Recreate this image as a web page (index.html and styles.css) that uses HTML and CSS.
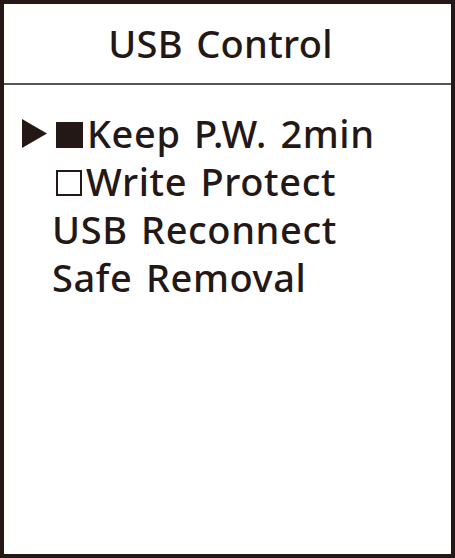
FILE: index.html
```html
<!DOCTYPE html>
<html>
<head>
<meta charset="utf-8">
<link rel="stylesheet" href="styles.css">
</head>
<body>
<div class="screen">
  <div class="header">USB Control</div>
  <ul class="menu">
    <li class="row selected"><span class="cursor"><svg width="25" height="29" viewBox="0 0 25 29"><polygon points="0,0 25,14.5 0,29" fill="#231815"/></svg></span><span class="label"><span class="box filled"></span>Keep P.W. 2min</span></li>
    <li class="row"><span class="cursor"></span><span class="label"><span class="box empty"></span>Write Protect</span></li>
    <li class="row"><span class="cursor"></span><span class="label">USB Reconnect</span></li>
    <li class="row"><span class="cursor"></span><span class="label">Safe Removal</span></li>
  </ul>
</div>
</body>
</html>
```

FILE: styles.css
```css
html, body {
  margin: 0;
  padding: 0;
  background: #231815;
}
.screen {
  box-sizing: border-box;
  width: 455px;
  height: 558px;
  border-style: solid;
  border-color: #231815;
  border-width: 4px 4px 4px 4px;
  background: #ffffff;
  font-family: "Noto Sans", sans-serif;
  font-weight: 460;
  letter-spacing: 0.6px;
  word-spacing: 3px;
  color: #231815;
  font-size: 38px;
}
.header {
  height: 79px;
  line-height: 79px;
  text-align: center;
  letter-spacing: 0.3px;
  padding-right: 14px;
  border-bottom: 2px solid #5a5556;
}
.menu {
  list-style: none;
  margin: 0;
  padding: 24px 0 0 18px;
}
.row {
  display: flex;
  align-items: baseline;
  height: 48px;
  line-height: 48px;
  white-space: nowrap;
}
.cursor {
  width: 30px;
  flex: none;
  display: flex;
  align-self: center;
}
.cursor svg {
  display: block;
  margin-top: 1px;
}
.box {
  display: inline-block;
  box-sizing: border-box;
  width: 27px;
  height: 26px;
  margin: 0 4px 0 4px;
  vertical-align: 0;
}
.box.filled {
  background: #231815;
}
.box.empty {
  border: 2px solid #231815;
  width: 26px;
  height: 26px;
}
```
